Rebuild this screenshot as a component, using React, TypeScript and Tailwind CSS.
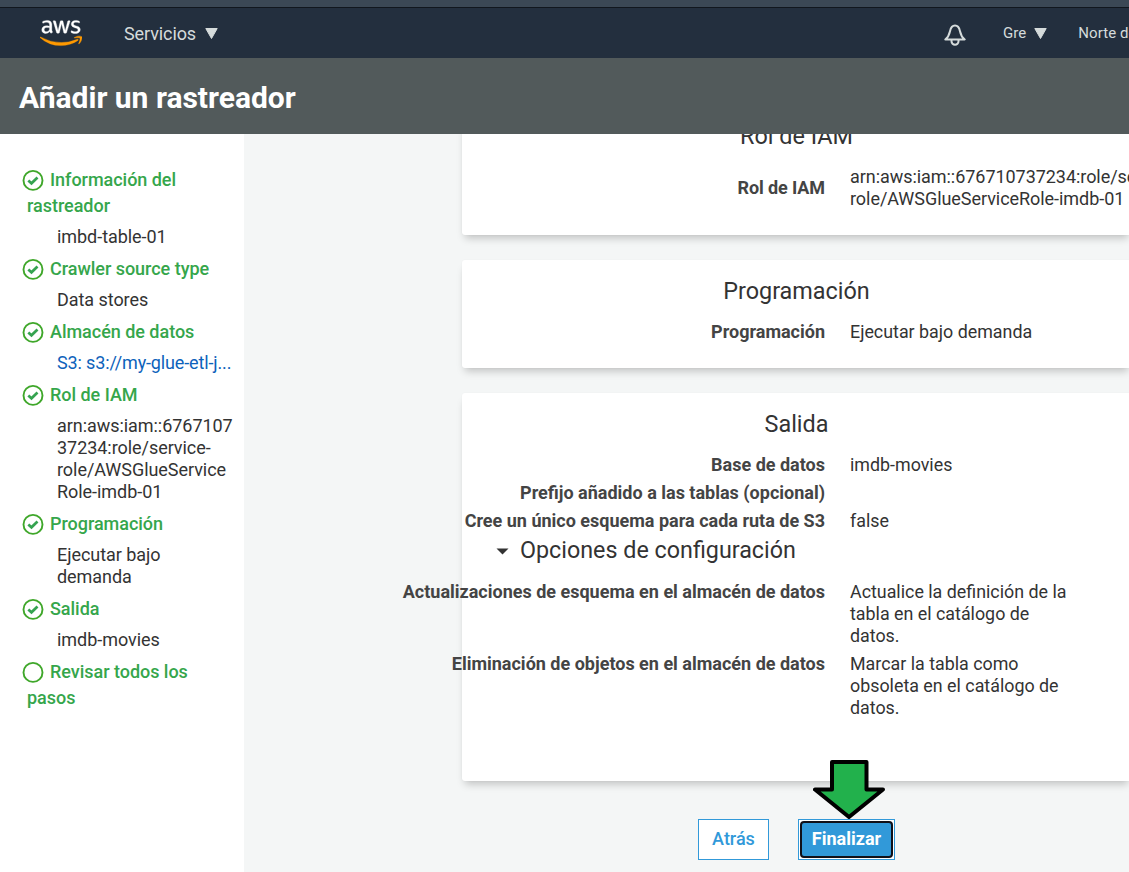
import type { ReactNode } from "react";
import { FaAws } from "react-icons/fa";

function AwsLogo() {
  return (
    <>
      <svg width="0" height="0" className="absolute">
        <defs>
          <linearGradient id="aws" gradientUnits="userSpaceOnUse" x1="0" y1="0" x2="0" y2="512">
            <stop offset="0.595" stopColor="#ffffff" />
            <stop offset="0.595" stopColor="#ff9900" />
          </linearGradient>
        </defs>
      </svg>
      <FaAws fill="url(#aws)" stroke="url(#aws)" strokeWidth="5" className="h-[34px] w-[42px] shrink-0" />
    </>
  );
}

function Caret({ className = "" }: { className?: string }) {
  return (
    <svg viewBox="0 0 13 11" className={`h-[11px] w-[13px] shrink-0 ${className}`}>
      <path d="M0.8 0.5h11.4L6.5 10.5z" fill="#d5dbdb" stroke="#d5dbdb" strokeLinejoin="round" />
    </svg>
  );
}

function Bell() {
  return (
    <svg viewBox="0 0 22 22" className="mt-1 h-[22px] w-[22px] shrink-0" fill="none" stroke="#d5dbdb" strokeWidth="2" strokeLinejoin="round">
      <path d="M1.300 15.500C4.500 13 5.300 10.500 6 7.200 6.700 4 8.300 1.600 11 1.600s4.300 2.400 5 5.600c.7 3.300 1.500 5.800 4.700 8.300z" />
      <path d="M7.500 15.800v1.500a3.500 3.400 0 0 0 7 0v-1.500" />
    </svg>
  );
}

function Status({ done }: { done: boolean }) {
  return (
    <svg viewBox="0 0 22 22" className="-ml-[5px] mr-1.5 inline-block h-[22px] w-[22px] align-[-5px]" fill="none">
      <circle cx="11" cy="11.400" r="9.500" stroke="#3fa72a" strokeWidth="1.900" />
      {done && <path d="M6.300 11.400l3.200 2.900 6-5.800" stroke="#35a350" strokeWidth="2.700" />}
    </svg>
  );
}

function Step({ title, done = true, link = false, children }: { title: string; done?: boolean; link?: boolean; children?: ReactNode }) {
  return (
    <li>
      <h3 className="pl-[27px] pr-8 text-[18px] font-medium leading-[26px] tracking-[-0.03px] text-[#35a64b]">
        <Status done={done} />
        {title}
      </h3>
      {children && (
        <p
          className={`mt-[7px] mb-2 pl-[57px] text-[18px] leading-[22px] ${
            link ? "tracking-[-0.14px] text-[#0d62bb]" : "tracking-[-0.05px] text-[#333333]"
          }`}
        >
          {children}
        </p>
      )}
    </li>
  );
}

function Card({ title, className = "", children }: { title: string; className?: string; children: ReactNode }) {
  return (
    <section className={`w-[669px] shrink-0 rounded-[3px] bg-white shadow-[0_6px_8px_-3px_rgba(0,0,0,0.22),0_0_2px_rgba(0,0,0,0.04)] ${className}`}>
      <h2 className="text-center text-[23.4px] leading-[30px]">{title}</h2>
      {children}
    </section>
  );
}

function Row({ label, className = "", children }: { label: string; className?: string; children?: ReactNode }) {
  return (
    <div className={`flex min-h-[22px] text-[18px] leading-[22px] ${className}`}>
      <div className="flex w-[363px] shrink-0 justify-end whitespace-nowrap font-bold text-[#444444]">{label}</div>
      <div className="ml-[25px] whitespace-nowrap text-[17.850px]">{children}</div>
    </div>
  );
}

export default function App() {
  return (
    <div className="flex h-[872px] w-[1129px] flex-col overflow-hidden bg-[#f4f6f6] font-['Roboto',sans-serif] text-[#333333]">
      <div className="h-2 shrink-0 border-b border-[#11171e] bg-[#3b4855]" />
      <nav className="flex h-[50px] shrink-0 items-center whitespace-nowrap bg-[#232f3e] pl-[39.500px] text-[#d5dbdb]">
        <AwsLogo />
        <span className="ml-[42.500px] text-[18px] tracking-[-0.1px]">Servicios</span>
        <Caret className="ml-[8.500px]" />
        <div className="ml-[726px] flex items-center">
          <Bell />
          <span className="ml-[37.500px] text-[15px]">Gre</span>
          <Caret className="ml-2" />
          <span className="ml-[31px] text-[15px] tracking-[0.1px]">Norte de Virginia</span>
        </div>
      </nav>
      <header className="flex h-[76px] shrink-0 items-center bg-[#525a5b] pl-[19px] pt-0.5">
        <h1 className="text-[30px] font-bold text-white">Añadir un rastreador</h1>
      </header>
      <div className="flex min-h-0 flex-1">
        <aside className="w-[244px] shrink-0 bg-white pt-[33px]">
          <ul>
            <Step title="Información del rastreador">imbd-table-01</Step>
            <Step title="Crawler source type">Data stores</Step>
            <Step title="Almacén de datos" link>S3: s3://my-glue-etl-j...</Step>
            <Step title="Rol de IAM">
              arn:aws:iam::6767107<br />37234:role/service-<br />role/AWSGlueService<br />Role-imdb-01
            </Step>
            <Step title="Programación">Ejecutar bajo<br />demanda</Step>
            <Step title="Salida">imdb-movies</Step>
            <Step title="Revisar todos los pasos" done={false} />
          </ul>
        </aside>
        <main className="flex min-w-0 flex-1 flex-col overflow-hidden pl-[218px]">
          <Card title="Rol de IAM" className="-mt-[13px] h-[114px]">
            <div className="mt-[15px] flex items-center text-[18px] leading-[22px]">
              <div className="w-[363px] shrink-0 text-right font-bold tracking-[-0.1px] text-[#444444]">Rol de IAM</div>
              <div className="ml-[25px] whitespace-nowrap tracking-[-0.05px]">
                arn:aws:iam::676710737234:role/service-<br />role/AWSGlueServiceRole-imdb-01
              </div>
            </div>
          </Card>
          <Card title="Programación" className="mt-[25px] h-[108px] pt-4">
            <Row label="Programación" className="mt-[15px]">Ejecutar bajo demanda</Row>
          </Card>
          <Card title="Salida" className="mt-[25px] h-[388px] pt-4">
            <Row label="Base de datos" className="mt-[15px]">imdb-movies</Row>
            <Row label="Prefijo añadido a las tablas (opcional)" className="mt-1.5" />
            <Row label="Cree un único esquema para cada ruta de S3" className="mt-1.5">false</Row>
            <div className="mt-[3px] flex items-center pl-[34px]">
              <svg viewBox="0 0 13 7" className="mt-0.5 h-[7px] w-[13px]">
                <path d="M0.500 0.500h12l-6 6z" fill="#333333" />
              </svg>
              <h2 className="ml-[11px] text-[23.3px] leading-[30px]">Opciones de configuración</h2>
            </div>
            <Row label="Actualizaciones de esquema en el almacén de datos" className="mt-4">
              Actualice la definición de la<br />tabla en el catálogo de<br />datos.
            </Row>
            <Row label="Eliminación de objetos en el almacén de datos" className="mt-1.5">
              Marcar la tabla como<br />obsoleta en el catálogo de<br />datos.
            </Row>
          </Card>
          <div className="mt-[38px] flex gap-[29px] pl-[236px] text-[18px]">
            <button className="h-[41px] w-[71px] border border-[#3199d9] bg-white pb-0.5 font-medium text-[#3199d9]">Atrás</button>
            <div className="relative">
              <button className="flex h-[41px] w-[97px] border border-[#3199d9] bg-white p-px">
                <span className="flex flex-1 items-center justify-center rounded-[4px] border-2 border-[#101018] bg-[#3199d9] pb-0.5 font-bold text-white">
                  Finalizar
                </span>
              </button>
              <svg viewBox="0 0 72 60" className="absolute -top-[59px] left-[15px] h-[60px] w-[72px]">
                <path d="M19 2h34.500v27.500H70L36 57 2 29.500h17z" fill="#22b14c" stroke="#000000" strokeWidth="4" strokeLinejoin="round" />
              </svg>
            </div>
          </div>
        </main>
      </div>
    </div>
  );
}
